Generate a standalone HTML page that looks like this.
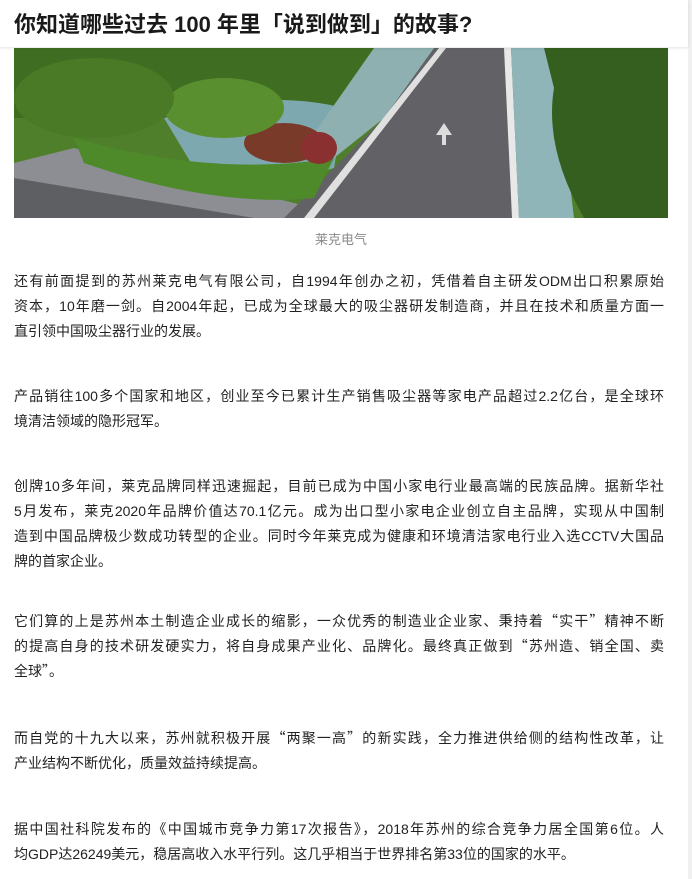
<!DOCTYPE html>
<html><head><meta charset="utf-8"><style>
html,body{margin:0;padding:0;background:#fff;width:692px;height:879px;overflow:hidden;font-family:"Liberation Sans","Noto Sans CJK SC",sans-serif;}
.rs{position:absolute;left:688px;top:0;width:4px;height:879px;background:#f0f0f0;}
.hd{position:absolute;left:0;top:0;width:688px;height:47px;background:#fff;box-shadow:0 1px 3px rgba(0,0,0,.12);z-index:2}
.hd h1{margin:0;position:absolute;left:14px;top:7px;font-size:22px;font-weight:bold;color:#1a1a1a;white-space:nowrap;letter-spacing:0px}
.img{position:absolute;left:14px;top:48px;width:654px;height:170px;overflow:hidden;background:#5a8a30}
.cap{position:absolute;top:229px;left:0;width:682px;text-align:center;font-size:13px;color:#8a8a8a}
.p{position:absolute;left:14px;width:650px;font-size:14px;line-height:25px;color:#222;white-space:nowrap}
.p .f{text-align:justify;text-align-last:justify}
.q{font-family:"Noto Sans CJK SC",sans-serif}
</style></head><body>
<div class="hd"><h1>你知道哪些过去 100 年里「说到做到」的故事?</h1></div>
<div class="img">
<svg width="654" height="170" viewBox="0 0 654 170">
<rect width="654" height="170" fill="#4f7f2a"/>
<rect x="0" y="0" width="654" height="70" fill="#3f6e22"/>
<path d="M0 115 L60 100 L340 170 L0 170Z" fill="#8c8e94"/>
<path d="M0 130 L240 170 L0 170Z" fill="#5e5f63"/>
<path d="M150 70 Q250 40 330 60 L320 120 Q250 140 180 120Z" fill="#7da8b0"/>
<path d="M360 0 L440 0 L370 70 L320 110 L290 100 Z" fill="#8fb0b0"/>
<path d="M420 0 L490 0 L500 170 L270 170 L370 70Z" fill="#626266"/>
<path d="M490 0 L497 0 L505 170 L498 170Z" fill="#e8e8e8"/>
<path d="M425 0 L432 0 L300 170 L290 170Z" fill="#e0e0e0"/>
<path d="M497 0 L540 0 L560 170 L505 170Z" fill="#8fb5b8"/>
<path d="M530 0 L654 0 L654 170 L570 170 Q530 100 540 40Z" fill="#355f1e"/>
<path d="M60 90 Q200 130 320 110 L300 150 Q200 160 70 115Z" fill="#4e8a2a"/>
<ellipse cx="270" cy="95" rx="40" ry="20" fill="#7a3a2a"/>
<ellipse cx="305" cy="100" rx="18" ry="16" fill="#8a3030"/>
<ellipse cx="210" cy="60" rx="60" ry="30" fill="#5a8f30"/>
<ellipse cx="80" cy="50" rx="80" ry="40" fill="#4a7a25"/>
<path d="M430 75 l-8 12 l6 0 l0 10 l4 0 l0 -10 l6 0Z" fill="#ddd"/>
</svg>
</div>
<div class="cap">莱克电气</div>
<div class="p" style="top:269px"><div class="f">还有前面提到的苏州莱克电气有限公司，自1994年创办之初，凭借着自主研发ODM出口积累原始</div><div class="f">资本，10年磨一剑。自2004年起，已成为全球最大的吸尘器研发制造商，并且在技术和质量方面一</div><div>直引领中国吸尘器行业的发展。</div></div>
<div class="p" style="top:384px"><div class="f">产品销往100多个国家和地区，创业至今已累计生产销售吸尘器等家电产品超过2.2亿台，是全球环</div><div>境清洁领域的隐形冠军。</div></div>
<div class="p" style="top:474px"><div class="f">创牌10多年间，莱克品牌同样迅速掘起，目前已成为中国小家电行业最高端的民族品牌。据新华社</div><div class="f">5月发布，莱克2020年品牌价值达70.1亿元。成为出口型小家电企业创立自主品牌，实现从中国制</div><div class="f">造到中国品牌极少数成功转型的企业。同时今年莱克成为健康和环境清洁家电行业入选CCTV大国品</div><div>牌的首家企业。</div></div>
<div class="p" style="top:609px"><div class="f">它们算的上是苏州本土制造企业成长的缩影，一众优秀的制造业企业家、秉持着<span class="q">“</span>实干<span class="q">”</span>精神不断</div><div class="f">的提高自身的技术研发硬实力，将自身成果产业化、品牌化。最终真正做到<span class="q">“</span>苏州造、销全国、卖</div><div>全球<span class="q">”</span>。</div></div>
<div class="p" style="top:726px"><div class="f">而自党的十九大以来，苏州就积极开展<span class="q">“</span>两聚一高<span class="q">”</span>的新实践，全力推进供给侧的结构性改革，让</div><div>产业结构不断优化，质量效益持续提高。</div></div>
<div class="p" style="top:817px"><div class="f">据中国社科院发布的《中国城市竞争力第17次报告》，2018年苏州的综合竞争力居全国第6位。人</div><div>均GDP达26249美元，稳居高收入水平行列。这几乎相当于世界排名第33位的国家的水平。</div></div>
<div class="rs"></div>
</body></html>
